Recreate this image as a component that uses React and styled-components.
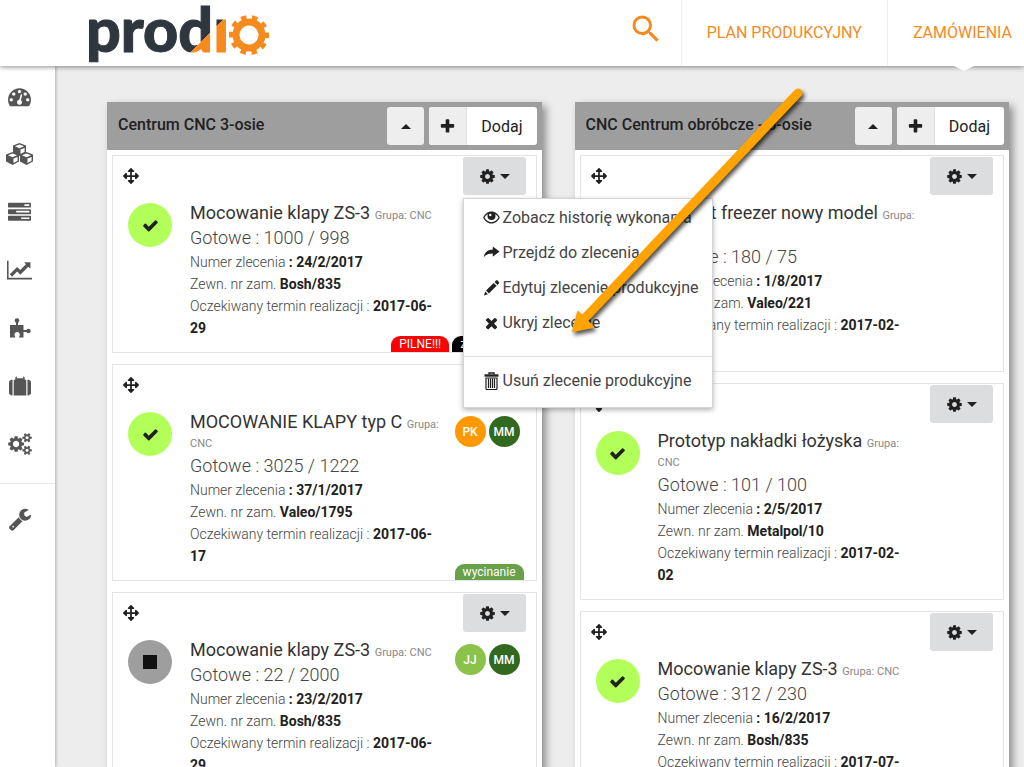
import { useState } from 'react';
import styled, { createGlobalStyle } from 'styled-components';
import { MdSearch } from 'react-icons/md';
import { FaArrowsAlt } from 'react-icons/fa';

const icons = {
  dashboard:
    'M384 1152q0-53-37.5-90.5t-90.5-37.5-90.5 37.5-37.5 90.5 37.5 90.5 90.5 37.5 90.5-37.5 37.5-90.5zm192-448q0-53-37.5-90.5t-90.5-37.5-90.5 37.5-37.5 90.5 37.5 90.5 90.5 37.5 90.5-37.5 37.5-90.5zm428 481l101-382q6-26-7.5-48.5t-38.5-29.5-48 6.5-30 39.5l-101 382q-60 5-107 43.5t-63 98.5q-20 77 20 146t117 89 146-20 89-117q16-60-6-117t-72-91zm660-33q0-53-37.5-90.5t-90.5-37.5-90.5 37.5-37.5 90.5 37.5 90.5 90.5 37.5 90.5-37.5 37.5-90.5zm-640-640q0-53-37.5-90.5t-90.5-37.5-90.5 37.5-37.5 90.5 37.5 90.5 90.5 37.5 90.5-37.5 37.5-90.5zm448 192q0-53-37.5-90.5t-90.5-37.5-90.5 37.5-37.5 90.5 37.5 90.5 90.5 37.5 90.5-37.5 37.5-90.5zm320 448q0 261-141 483-19 29-54 29h-1402q-35 0-54-29-141-221-141-483 0-182 71-348t191-286 286-191 348-71 348 71 286 191 191 286 71 348z',
  tasks:
    'M1024 1408h640v-128h-640v128zm-384-512h1024v-128h-1024v128zm640-512h384v-128h-384v128zm512 832v256q0 26-19 45t-45 19h-1664q-26 0-45-19t-19-45v-256q0-26 19-45t45-19h1664q26 0 45 19t19 45zm0-512v256q0 26-19 45t-45 19h-1664q-26 0-45-19t-19-45v-256q0-26 19-45t45-19h1664q26 0 45 19t19 45zm0-512v256q0 26-19 45t-45 19h-1664q-26 0-45-19t-19-45v-256q0-26 19-45t45-19h1664q26 0 45 19t19 45z',
  chart:
    'M2048 1536v128h-2048v-1536h128v1408h1920zm-128-1248v435q0 21-19.5 29.5t-35.5-7.5l-121-121-633 633q-10 10-23 10t-23-10l-233-233-416 416-192-192 585-585q10-10 23-10t23 10l233 233 464-464-121-121q-16-16-7.5-35.5t29.5-19.5h435q14 0 23 9t9 23z',
  suitcase:
    'M640 256h512v-128h-512v128zm-352 128v1280h-64q-92 0-158-66t-66-158v-832q0-92 66-158t158-66h64zm1120 0v1280h-1024v-1280h128v-160q0-40 28-68t68-28h576q40 0 68 28t28 68v160h128zm384 224v832q0 92-66 158t-158 66h-64v-1280h64q92 0 158 66t66 158z',
  cogs: 'M896 896q0-106-75-181t-181-75-181 75-75 181 75 181 181 75 181-75 75-181zm768 512q0-52-38-90t-90-38-90 38-38 90q0 53 37.5 90.5t90.5 37.5 90.5-37.5 37.5-90.5zm0-1024q0-52-38-90t-90-38-90 38-38 90q0 53 37.5 90.5t90.5 37.5 90.5-37.5 37.5-90.5zm-384 421v185q0 10-7 19.5t-16 10.5l-155 24q-11 35-32 76 34 48 90 115 7 11 7 20 0 12-7 19-23 30-82.5 89.5t-78.5 59.5q-11 0-21-7l-115-90q-37 19-77 31-11 108-23 155-7 24-30 24h-186q-11 0-20-7.5t-10-17.5l-23-153q-34-10-75-31l-118 89q-7 7-20 7-11 0-21-8-144-133-144-160 0-9 7-19 10-14 41-53t47-61q-23-44-35-82l-152-24q-10-1-17-9.5t-7-19.5v-185q0-10 7-19.5t16-10.5l155-24q11-35 32-76-34-48-90-115-7-11-7-20 0-12 7-20 22-30 82-89t79-59q11 0 21 7l115 90q34-18 77-32 11-108 23-154 7-24 30-24h186q11 0 20 7.5t10 17.5l23 153q34 10 75 31l118-89q8-7 20-7 11 0 21 8 144 133 144 160 0 8-7 19-12 16-42 54t-45 60q23 48 34 82l152 23q10 2 17 10.5t7 19.5zm640 533v140q0 16-149 31-12 27-30 52 51 113 51 138 0 4-4 7-122 71-124 71-8 0-46-47t-52-68q-20 2-30 2t-30-2q-14 21-52 68t-46 47q-2 0-124-71-4-3-4-7 0-25 51-138-18-25-30-52-149-15-149-31v-140q0-16 149-31 13-29 30-52-51-113-51-138 0-4 4-7 4-2 35-20t59-34 30-16q8 0 46 46.5t52 67.5q20-2 30-2t30 2q51-71 92-112l6-2q4 0 124 70 4 3 4 7 0 25-51 138 17 23 30 52 149 15 149 31zm0-1024v140q0 16-149 31-12 27-30 52 51 113 51 138 0 4-4 7-122 71-124 71-8 0-46-47t-52-68q-20 2-30 2t-30-2q-14 21-52 68t-46 47q-2 0-124-71-4-3-4-7 0-25 51-138-18-25-30-52-149-15-149-31v-140q0-16 149-31 13-29 30-52-51-113-51-138 0-4 4-7 4-2 35-20t59-34 30-16q8 0 46 46.5t52 67.5q20-2 30-2t30 2q51-71 92-112l6-2q4 0 124 70 4 3 4 7 0 25-51 138 17 23 30 52 149 15 149 31z',
  wrench:
    'M448 1472q0-26-19-45t-45-19-45 19-19 45 19 45 45 19 45-19 19-45zm644-420l-682 682q-37 37-90 37-52 0-91-37l-106-108q-38-36-38-90 0-53 38-91l681-681q39 98 114.5 173.5t173.5 114.5zm634-435q0 39-23 106-47 134-164.5 217.5t-258.5 83.5q-185 0-316.5-131.5t-131.5-316.5 131.5-316.5 316.5-131.5q58 0 121.5 16.5t107.5 46.5q16 11 16 28t-16 28l-293 169v224l193 107q5-3 79-48.5t135.5-81 70.5-35.5q15 0 23.5 10t8.5 25z',
  cog: 'M1152 896q0-106-75-181t-181-75-181 75-75 181 75 181 181 75 181-75 75-181zm512-109v222q0 12-8 23t-20 13l-185 28q-19 54-39 91 35 50 107 138 10 12 10 25t-9 23q-27 37-99 108t-94 71q-12 0-26-9l-138-108q-44 23-91 38-16 136-29 186-7 28-36 28h-222q-14 0-24.5-8.5t-11.5-21.5l-28-184q-49-16-90-37l-141 107q-10 9-25 9-14 0-25-11-126-114-165-168-7-10-7-23 0-12 8-23 15-21 51-66.5t54-70.5q-27-50-41-99l-183-27q-13-2-21-12.5t-8-23.5v-222q0-12 8-23t19-13l186-28q14-46 39-92-40-57-107-138-10-12-10-24 0-10 9-23 26-36 98.5-107.5t94.5-71.5q13 0 26 10l138 107q44-23 91-38 16-136 29-186 7-28 36-28h222q14 0 24.5 8.5t11.5 21.5l28 184q49 16 90 37l142-107q9-9 24-9 13 0 25 10 129 119 165 170 7 8 7 22 0 12-8 23-15 21-51 66.5t-54 70.5q26 50 41 98l183 28q13 2 21 12.5t8 23.5z',
  check:
    'M1671 566q0 40-28 68l-724 724-136 136q-28 28-68 28t-68-28l-136-136-362-362q-28-28-28-68t28-68l136-136q28-28 68-28t68 28l294 295 656-657q28-28 68-28t68 28l136 136q28 28 28 68z',
  plus: 'M1600 736v192q0 40-28 68t-68 28h-416v416q0 40-28 68t-68 28h-192q-40 0-68-28t-28-68v-416h-416q-40 0-68-28t-28-68v-192q0-40 28-68t68-28h416v-416q0-40 28-68t68-28h192q40 0 68 28t28 68v416h416q40 0 68 28t28 68z',
  times:
    'M1490 1322q0 40-28 68l-136 136q-28 28-68 28t-68-28l-294-294-294 294q-28 28-68 28t-68-28l-136-136q-28-28-28-68t28-68l294-294-294-294q-28-28-28-68t28-68l136-136q28-28 68-28t68 28l294 294 294-294q28-28 68-28t68 28l136 136q28 28 28 68t-28 68l-294 294 294 294q28 28 28 68z',
};

const Icon = ({ name, size = 16, width = 1792 }) => (
  <svg
    width={Math.round((size * width) / 1792)}
    height={size}
    viewBox={`0 0 ${width} 1792`}
    fill="currentColor"
    aria-hidden="true"
  >
    <path d={icons[name]} />
  </svg>
);

const Cube = ({ x, y }) => (
  <g transform={`translate(${x} ${y})`}>
    <path d="M6.5 0 L13 2.6 V9.5 L6.5 13 L0 9.5 V2.6 Z" />
    <path d="M6.5 1.5 L11 3.3 L6.5 5.2 L2 3.3 Z" fill="#fff" />
    <path d="M7.5 6.6 L11.6 4.9 V8.7 L7.5 10.9 Z" fill="#fff" />
  </g>
);

const CubesIcon = () => (
  <svg width="27" height="22" viewBox="0 0 27 22" fill="currentColor">
    <Cube x={7} y={0} />
    <Cube x={0} y={9} />
    <Cube x={14} y={9} />
  </svg>
);

const PuzzleIcon = () => (
  <svg width="22" height="20" viewBox="0 0 22 20" fill="currentColor">
    <circle cx="8" cy="2.5" r="2.3" />
    <path d="M7 4h2v3h5.5v5h4v2h-4v5.5H10c0-1 .8-1.6.8-3 0-1.5-1-2.5-2.6-2.5s-2.700 1-2.700 2.500c0 1.400.9 2 .9 3H1V7h6z" />
    <circle cx="19.5" cy="13" r="2.2" />
  </svg>
);

const EyeIcon = () => (
  <svg width="17" height="13" viewBox="0 0 17 13">
    <path
      fill="currentColor"
      fillRule="evenodd"
      d="M8.5.5C4.8.5 1.6 3.2.2 6.5c1.4 3.3 4.6 6 8.3 6s6.900-2.700 8.300-6C15.400 3.200 12.200.5 8.500.5zM5 2.900A4.300 4.300 0 0 0 4.500 5a4 4 0 0 0 8 0c0-.8-.2-1.500-.5-2.100 1.500.8 2.700 2 3.500 3.600-1.300 2.600-4 4.700-7 4.700s-5.700-2.100-7-4.700C2.300 4.900 3.500 3.700 5 2.900z"
    />
    <circle cx="7.3" cy="4" r="1.2" fill="#fff" />
  </svg>
);

const ShareIcon = () => (
  <svg width="16" height="14" viewBox="0 0 16 14" fill="currentColor">
    <path d="M16 5.5 9.3.5v3C4 3.7.8 6.8.2 11.500c2-2.700 4.700-4 9.100-4v3.300z" />
  </svg>
);

const PencilIcon = () => (
  <svg width="16" height="16" viewBox="0 0 16 16" fill="currentColor">
    <path d="M12.500.6c.5-.5 1.100-.5 1.600 0l1.300 1.300c.5.5.5 1.100 0 1.600L14 4.900 11.100 2zM10.200 2.900l2.900 2.900-7.700 7.700-2.900-2.900zM1.800 11.600l2.600 2.600L.4 15.600z" />
  </svg>
);

const TrashIcon = () => (
  <svg width="16" height="18" viewBox="0 0 16 18" fill="none" stroke="currentColor">
    <path d="M5.5 2.5v-1.5h5v1.5" strokeWidth="1.4" />
    <path d="M1 3.5h14" strokeWidth="2.4" />
    <path d="M2.5 6h11v10.500a1 1 0 0 1-1 1h-9a1 1 0 0 1-1-1z" strokeWidth="1.2" />
    <path d="M5 6.5v9.5M7 6.5v9.5M9 6.5v9.5M11 6.5v9.5" strokeWidth="1.2" />
  </svg>
);

const Logo = () => (
  <svg width="184" height="60" viewBox="0 0 184 60" overflow="visible" role="img" aria-label="prodio">
    <defs>
      <linearGradient
        id="split"
        gradientUnits="userSpaceOnUse"
        x1="100"
        y1="20"
        x2="128"
        y2="48"
      >
        <stop offset="0.56" stopColor="#30363e" />
        <stop offset="0.56" stopColor="#f58a1f" />
      </linearGradient>
    </defs>
    <text
      x="-1"
      y="48"
      fill="url(#split)"
      stroke="url(#split)"
      strokeWidth="1"
      fontFamily="Lato, 'Liberation Sans', sans-serif"
      fontWeight="900"
      fontSize="61"
    >
      prodı
    </text>
    <g fill="none" stroke="#f58a1f" transform="rotate(-8 162 31)">
      <circle cx="162" cy="31" r="13" strokeWidth="7" />
      <circle cx="162" cy="31" r="17" strokeWidth="6" pathLength="120" strokeDasharray="6 6" />
    </g>
  </svg>
);

const sideLinks = [
  { label: 'Pulpit', icon: <Icon name="dashboard" size={23} /> },
  { label: 'Magazyn', icon: <CubesIcon /> },
  { label: 'Zadania', icon: <Icon name="tasks" size={23} /> },
  { label: 'Raporty', icon: <Icon name="chart" size={22} width={2048} /> },
  { label: 'Moduły', icon: <PuzzleIcon /> },
  { label: 'Zasoby', icon: <Icon name="suitcase" size={22} /> },
  { label: 'Konfiguracja', icon: <Icon name="cogs" size={22} width={1920} /> },
];

const columns = [
  {
    title: 'Centrum CNC 3-osie',
    orders: [
      {
        id: 1,
        name: 'Mocowanie klapy ZS-3',
        done: '1000 / 998',
        number: '24/2/2017',
        external: 'Bosh/835',
        due: '2017-06-29',
        tags: [
          { text: 'PILNE!!!', color: '#fd0002' },
          { text: 'zamknięte', color: '#000' },
        ],
      },
      {
        id: 2,
        name: 'MOCOWANIE KLAPY typ C',
        done: '3025 / 1222',
        number: '37/1/2017',
        external: 'Valeo/1795',
        due: '2017-06-17',
        people: [
          { initials: 'PK', color: '#ff9803' },
          { initials: 'MM', color: '#33691e' },
        ],
        tags: [{ text: 'wycinanie', color: '#68a14a' }],
      },
      {
        id: 3,
        name: 'Mocowanie klapy ZS-3',
        done: '22 / 2000',
        number: '23/2/2017',
        external: 'Bosh/835',
        due: '2017-06-29',
        stopped: true,
        people: [
          { initials: 'JJ', color: '#8bc34a' },
          { initials: 'MM', color: '#33691e' },
        ],
      },
    ],
  },
  {
    title: 'CNC Centrum obróbcze - 5-osie',
    orders: [
      {
        id: 4,
        name: 'Uchwyt freezer nowy model',
        done: '180 / 75',
        number: '1/8/2017',
        external: 'Valeo/221',
        due: '2017-02-02',
      },
      {
        id: 5,
        name: 'Prototyp nakładki łożyska',
        done: '101 / 100',
        number: '2/5/2017',
        external: 'Metalpol/10',
        due: '2017-02-02',
      },
      {
        id: 6,
        name: 'Mocowanie klapy ZS-3',
        done: '312 / 230',
        number: '16/2/2017',
        external: 'Bosh/835',
        due: '2017-07-02',
      },
    ],
  },
];

const OrderMenu = () => (
  <Menu>
    <MenuLink href="#historia">
      <EyeIcon />
      Zobacz historię wykonania
    </MenuLink>
    <MenuLink href="#zlecenie">
      <ShareIcon />
      Przejdź do zlecenia
    </MenuLink>
    <MenuLink href="#edytuj">
      <PencilIcon />
      Edytuj zlecenie produkcyjne
    </MenuLink>
    <MenuLink href="#ukryj">
      <Icon name="times" size={20} />
      Ukryj zlecenie
    </MenuLink>
    <MenuDivider />
    <MenuLink href="#usun">
      <TrashIcon />
      Usuń zlecenie produkcyjne
    </MenuLink>
  </Menu>
);

const OrderCard = ({ order, isOpen, onToggle }) => {
  const { name, done, number, external, due, stopped, people = [], tags = [] } = order;
  return (
    <Card>
      <CardTop>
        <FaArrowsAlt size={16} />
        <MenuAnchor>
          <GearButton aria-label="Opcje zlecenia" onClick={onToggle}>
            <Icon name="cog" size={17} />
            <Caret />
          </GearButton>
          {isOpen && <OrderMenu />}
        </MenuAnchor>
      </CardTop>
      <CardBody>
        <Status $stopped={stopped}>
          {stopped ? <StopMark /> : <Icon name="check" size={17} />}
        </Status>
        <OrderInfo>
          <OrderName>
            {name} <small>Grupa: CNC</small>
          </OrderName>
          <Done>Gotowe : {done}</Done>
          <Detail>
            Numer zlecenia <b>: {number}</b>
          </Detail>
          <Detail>
            Zewn. nr zam. <b>{external}</b>
          </Detail>
          <Detail>
            Oczekiwany termin realizacji : <b>{due}</b>
          </Detail>
        </OrderInfo>
        <People>
          {people.map(({ initials, color }) => (
            <Avatar key={initials} $color={color}>
              {initials}
            </Avatar>
          ))}
        </People>
      </CardBody>
      <Tags>
        {tags.map(({ text, color }) => (
          <Tag key={text} $color={color}>
            {text}
          </Tag>
        ))}
      </Tags>
    </Card>
  );
};

const App = () => {
  const [openId, setOpenId] = useState(1);

  return (
    <Page>
      <GlobalStyle />
      <TopBar>
        <Logo />
        <TopNav>
          <SearchButton aria-label="Szukaj">
            <MdSearch size={36} />
          </SearchButton>
          <TopLink href="#plan">PLAN PRODUKCYJNY</TopLink>
          <TopLink href="#zamowienia" $active>
            ZAMÓWIENIA
          </TopLink>
        </TopNav>
      </TopBar>
      <Main>
        <Sidebar>
          {sideLinks.map(({ label, icon }) => (
            <SideLink key={label} href="#" aria-label={label}>
              {icon}
            </SideLink>
          ))}
          <SideDivider />
          <SideLink href="#" aria-label="Ustawienia">
            <Icon name="wrench" size={24} />
          </SideLink>
        </Sidebar>
        <Board>
          {columns.map(({ title, orders }) => (
            <Column key={title}>
              <ColumnHeader>
                <h2>{title}</h2>
                <HeaderButton aria-label="Zwiń">
                  <Caret $up />
                </HeaderButton>
                <AddButton>
                  <span>
                    <Icon name="plus" size={17} />
                  </span>
                  <span>Dodaj</span>
                </AddButton>
              </ColumnHeader>
              <CardList>
                {orders.map((order) => (
                  <OrderCard
                    key={order.id}
                    order={order}
                    isOpen={openId === order.id}
                    onToggle={() => setOpenId(openId === order.id ? null : order.id)}
                  />
                ))}
              </CardList>
            </Column>
          ))}
        </Board>
      </Main>
      <Pointer viewBox="0 0 250 260" aria-hidden="true">
        <path d="M238 13 L26 237" stroke="#ffa303" strokeWidth="9" strokeLinecap="round" />
        <path d="M13 251 L18 232 L33 247 Z" fill="#ffa303" stroke="#ffa303" strokeWidth="2" strokeLinejoin="round" />
      </Pointer>
    </Page>
  );
};
export default App;

const GlobalStyle = createGlobalStyle`
  * {
    box-sizing: border-box;
  }
  body {
    margin: 0;
    font-family: Roboto, 'Liberation Sans', sans-serif;
    font-size: 14px;
    color: #212121;
    background-color: #ededed;
  }
  a {
    text-decoration: none;
  }
  button {
    padding: 0;
    border: none;
    font: inherit;
    color: inherit;
    cursor: pointer;
  }
  svg {
    flex-shrink: 0;
  }
`;

const Page = styled.div`
  position: relative;
  display: flex;
  flex-direction: column;
  height: 100vh;
  overflow: hidden;
`;

const TopBar = styled.header`
  position: relative;
  z-index: 2;
  display: flex;
  align-items: stretch;
  justify-content: space-between;
  flex-shrink: 0;
  height: 66px;
  padding-left: 87px;
  background-color: #fff;
  box-shadow: 0 1px 5px rgba(0, 0, 0, 0.45);
  > svg {
    margin-top: 4px;
  }
`;

const TopNav = styled.nav`
  display: flex;
`;

const SearchButton = styled.button`
  display: flex;
  align-items: center;
  padding: 0 17px 8px;
  background: none;
  color: #f58a1f;
`;

const TopLink = styled.a`
  position: relative;
  display: flex;
  align-items: center;
  padding: 0 25px 2px;
  border-left: 1px solid #eee;
  font-size: 16px;
  color: #f58a1f;
  &:last-child {
    padding-right: 12px;
  }
  &::after {
    content: '';
    display: ${({ $active }) => ($active ? 'block' : 'none')};
    position: absolute;
    top: 100%;
    left: 66px;
    border: 10px solid transparent;
    border-top: 5px solid #fff;
    border-bottom: none;
  }
`;

const Main = styled.main`
  display: flex;
  flex: 1;
  min-height: 0;
`;

const Sidebar = styled.nav`
  flex-shrink: 0;
  width: 55px;
  padding-top: 1px;
  background-color: #fff;
  box-shadow: 1px 0 3px rgba(0, 0, 0, 0.25);
`;

const SideLink = styled.a`
  display: flex;
  align-items: center;
  justify-content: center;
  width: 39px;
  height: 58px;
  color: #555;
`;

const SideDivider = styled.hr`
  margin: 10px 0 6px;
  border: none;
  border-top: 1px solid #e8e8e8;
`;

const Board = styled.div`
  flex: 1;
  display: grid;
  grid-template-columns: 1fr 1fr;
  align-items: start;
  gap: 33px;
  padding: 36px 15px 0 52px;
`;

const Column = styled.section`
  background-color: #fff;
  box-shadow: 4px 4px 8px rgba(0, 0, 0, 0.4);
`;

const ColumnHeader = styled.header`
  display: flex;
  align-items: center;
  gap: 5px;
  height: 48px;
  padding: 0 5px 0 11px;
  background-color: #9e9e9e;
  h2 {
    flex: 1;
    margin: 0 0 4px;
    font-size: 16px;
    font-weight: 500;
  }
`;

const HeaderButton = styled.button`
  display: flex;
  align-items: center;
  justify-content: center;
  width: 37px;
  height: 38px;
  border-radius: 3px;
  background-color: #eee;
`;

const AddButton = styled.button`
  display: flex;
  height: 38px;
  border-radius: 3px;
  overflow: hidden;
  font-size: 16px;
  background-color: #fff;
  span {
    display: flex;
    align-items: center;
    padding: 0 14px;
  }
  span:first-child {
    padding: 0 10px;
    border-right: 1px solid #e0e0e0;
    background-color: #eee;
  }
`;

const Caret = styled.span`
  border: 5px solid transparent;
  border-top: ${({ $up }) => ($up ? 'none' : '5px solid #212121')};
  border-bottom: ${({ $up }) => ($up ? '5px solid #212121' : 'none')};
`;

const CardList = styled.div`
  display: flex;
  flex-direction: column;
  gap: 11px;
  padding: 5px;
`;

const Card = styled.article`
  position: relative;
  padding-bottom: 13px;
  border: 1px solid #e4e4e4;
`;

const CardTop = styled.div`
  display: flex;
  align-items: center;
  justify-content: space-between;
  height: 40px;
  margin-bottom: 7px;
  padding: 0 10px;
`;

const MenuAnchor = styled.div`
  position: relative;
`;

const GearButton = styled.button`
  display: flex;
  align-items: center;
  justify-content: center;
  gap: 4px;
  width: 63px;
  height: 38px;
  border-radius: 3px;
  background-color: #dcdddf;
`;

const Menu = styled.div`
  position: absolute;
  top: 41px;
  left: 0;
  z-index: 1;
  width: 250px;
  padding: 1px 0 9px;
  border: 1px solid #d4d4d4;
  background-color: #fff;
  box-shadow: 0 2px 5px rgba(0, 0, 0, 0.3);
`;

const MenuLink = styled.a`
  display: flex;
  align-items: center;
  gap: 3px;
  height: 35px;
  padding-left: 19px;
  font-size: 16px;
  white-space: nowrap;
  color: #444;
  svg {
    width: 17px;
    color: #212121;
  }
`;

const MenuDivider = styled.hr`
  margin: 16px 0 6px;
  border: none;
  border-top: 1px solid #ddd;
`;

const CardBody = styled.div`
  display: grid;
  grid-template-columns: 44px 1fr 65px;
  padding: 0 16px 0 15px;
`;

const Status = styled.span`
  display: flex;
  align-items: center;
  justify-content: center;
  width: 44px;
  height: 44px;
  border-radius: 50%;
  background-color: ${({ $stopped }) => ($stopped ? '#9e9e9e' : '#b2ff59')};
`;

const StopMark = styled.span`
  width: 14px;
  height: 14px;
  background-color: #111;
`;

const OrderInfo = styled.div`
  padding-left: 18px;
`;

const OrderName = styled.h3`
  margin: 0 0 3px;
  font-size: 18px;
  line-height: 19px;
  font-weight: 400;
  color: #333;
  small {
    font-size: 11px;
    line-height: 11px;
    color: #888;
  }
`;

const Done = styled.p`
  margin: 0;
  font-size: 18px;
  line-height: 26px;
  font-weight: 300;
  color: #444;
`;

const Detail = styled.p`
  margin: 0;
  padding-right: 10px;
  font-size: 14px;
  line-height: 22px;
  font-weight: 300;
  color: #444;
  b {
    font-weight: 700;
    color: #212121;
  }
`;

const People = styled.div`
  display: flex;
  gap: 3px;
  padding-top: 4px;
`;

const Avatar = styled.span`
  display: flex;
  align-items: center;
  justify-content: center;
  width: 31px;
  height: 31px;
  border-radius: 50%;
  font-size: 12px;
  font-weight: 500;
  color: #fff;
  background-color: ${({ $color }) => $color};
`;

const Tags = styled.div`
  position: absolute;
  right: 12px;
  bottom: 0;
  display: flex;
  gap: 3px;
`;

const Tag = styled.span`
  padding: 0 8px;
  border-radius: 9px 9px 0 0;
  font-size: 12px;
  line-height: 16px;
  color: #fff;
  background-color: ${({ $color }) => $color};
`;

const Pointer = styled.svg`
  position: absolute;
  top: 80px;
  left: 560px;
  z-index: 3;
  width: 250px;
  height: 260px;
  fill: none;
  pointer-events: none;
  filter: drop-shadow(2px 3px 2px rgba(0, 0, 0, 0.7));
`;
